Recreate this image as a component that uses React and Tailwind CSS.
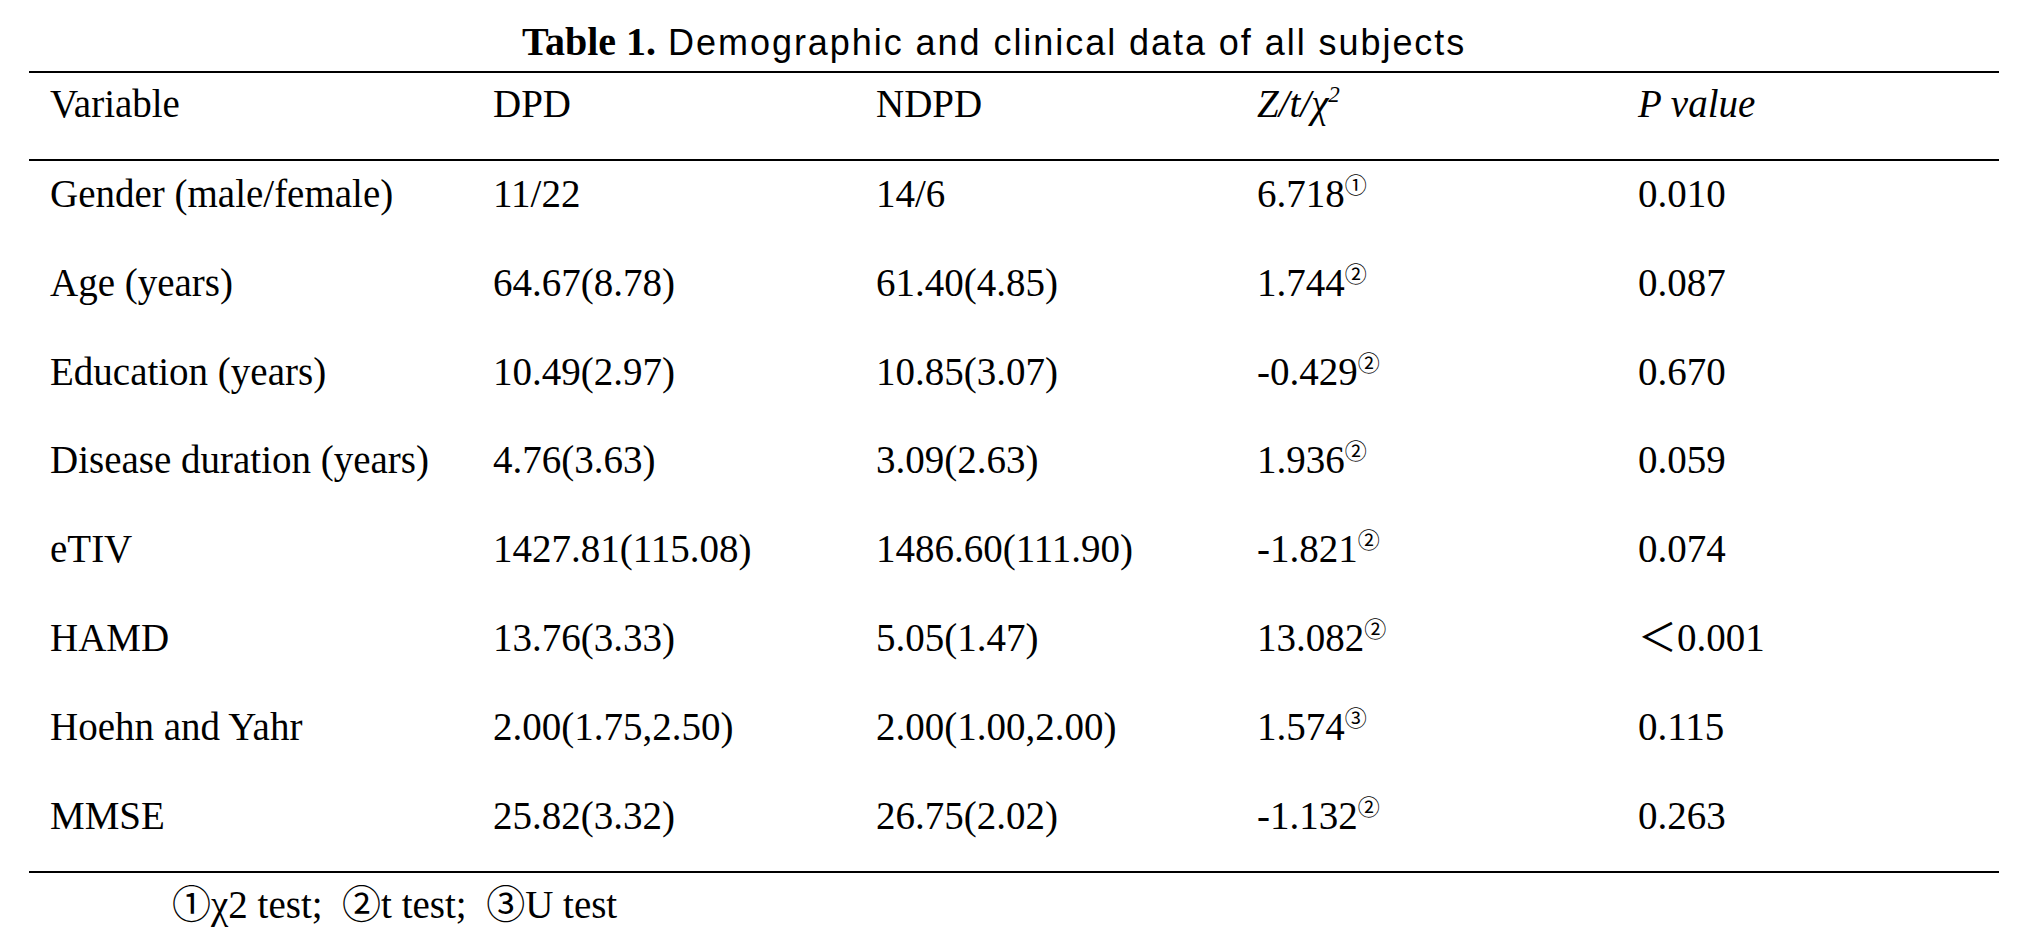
const rows = [
  ['Gender (male/female)', '11/22', '14/6', '6.718', '①', '0.010'],
  ['Age (years)', '64.67(8.78)', '61.40(4.85)', '1.744', '②', '0.087'],
  ['Education (years)', '10.49(2.97)', '10.85(3.07)', '-0.429', '②', '0.670'],
  ['Disease duration (years)', '4.76(3.63)', '3.09(2.63)', '1.936', '②', '0.059'],
  ['eTIV', '1427.81(115.08)', '1486.60(111.90)', '-1.821', '②', '0.074'],
  ['HAMD', '13.76(3.33)', '5.05(1.47)', '13.082', '②', '＜0.001'],
  ['Hoehn and Yahr', '2.00(1.75,2.50)', '2.00(1.00,2.00)', '1.574', '③', '0.115'],
  ['MMSE', '25.82(3.32)', '26.75(2.02)', '-1.132', '②', '0.263'],
];

const cjk = "font-['Liberation_Serif','Noto_Sans_CJK_SC',serif]";

function Mark({ children }) {
  return (
    <span className="relative -top-[14px] align-baseline font-['Noto_Sans_CJK_SC',sans-serif] text-[22px] leading-none">
      {children}
    </span>
  );
}

export default function App() {
  return (
    <div className="h-[944px] w-[2026px] bg-white font-['Liberation_Serif',serif] text-black">
      <div className="h-[71px] pl-[522px] pt-[22px] text-[36px] leading-none font-['Liberation_Sans',sans-serif] tracking-[1.95px]">
        <span className="font-['Liberation_Serif',serif] text-[40px] font-bold tracking-normal">Table 1.</span> Demographic and clinical data of all subjects
      </div>

      <div className="ml-[29px] w-[1970px]">
        <div className="grid h-[90px] grid-cols-[443px_383px_381px_381px_1fr] border-y-2 border-black pl-[21px] pt-[11px] text-[39px] leading-none">
          <div>Variable</div>
          <div>DPD</div>
          <div>NDPD</div>
          <div className="italic">
            Z/t/χ<span className="relative -top-[15px] align-baseline text-[23px] leading-none">2</span>
          </div>
          <div className="italic">P value</div>
        </div>

        <div className="border-b-2 border-black">
          {rows.map((r) => (
            <div
              key={r[0]}
              className="grid h-[88.8px] grid-cols-[443px_383px_381px_381px_1fr] pl-[21px] pt-[13px] text-[39px] leading-none"
            >
              <div>{r[0]}</div>
              <div>{r[1]}</div>
              <div>{r[2]}</div>
              <div>
                {r[3]}
                <Mark>{r[4]}</Mark>
              </div>
              <div className={cjk}>{r[5]}</div>
            </div>
          ))}
        </div>

        <div className={`${cjk} whitespace-pre pl-[143px] pt-[12px] text-[39px] leading-none`}>
          ①χ2 test;  ②t test;  ③U test
        </div>
      </div>
    </div>
  );
}
